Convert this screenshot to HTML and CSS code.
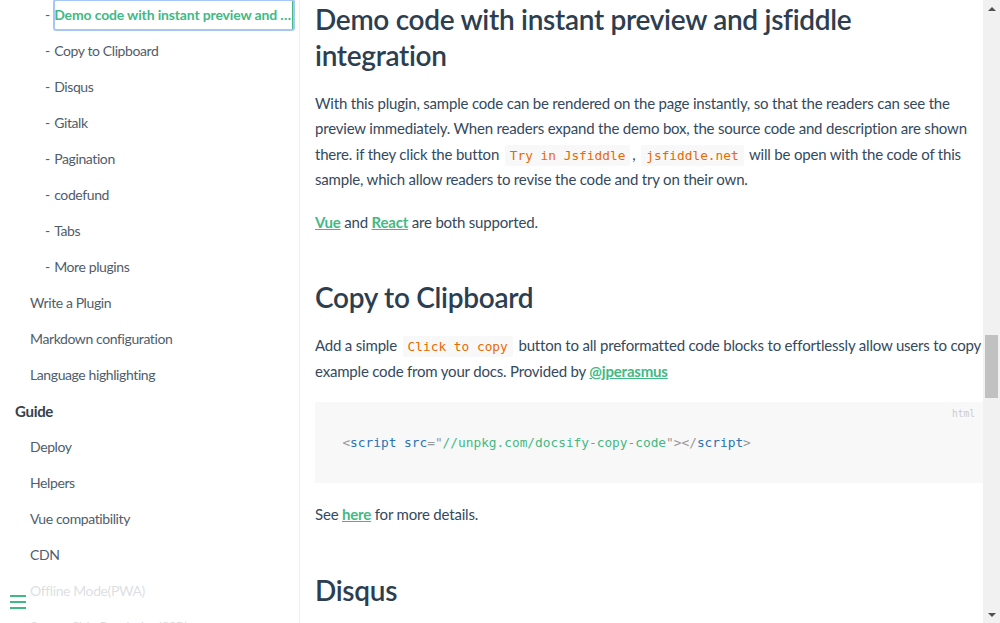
FILE: index.html
```html
<!DOCTYPE html>
<html lang="en">
<head>
<meta charset="utf-8">
<title>Plugins - docsify</title>
<link rel="stylesheet" href="styles.css">
</head>
<body>
<div class="app">
  <aside class="sidebar">
    <div class="sidebar-nav">
      <ul class="nav lv2">
        <li>
          <ul class="nav sub">
            <li class="active"><a href="#demo" class="focused">Demo code with instant preview and jsfiddle integration</a></li>
            <li><a href="#copy">Copy to Clipboard</a></li>
            <li><a href="#disqus">Disqus</a></li>
            <li><a href="#gitalk">Gitalk</a></li>
            <li><a href="#pagination">Pagination</a></li>
            <li><a href="#codefund">codefund</a></li>
            <li><a href="#tabs">Tabs</a></li>
            <li><a href="#more">More plugins</a></li>
          </ul>
        </li>
        <li><a href="#write">Write a Plugin</a></li>
        <li><a href="#markdown">Markdown configuration</a></li>
        <li><a href="#lang">Language highlighting</a></li>
      </ul>
      <ul class="nav lv1">
        <li>
          <p class="group">Guide</p>
          <ul class="nav inner">
            <li><a href="#deploy">Deploy</a></li>
            <li><a href="#helpers">Helpers</a></li>
            <li><a href="#vue">Vue compatibility</a></li>
            <li><a href="#cdn">CDN</a></li>
            <li><a href="#pwa">Offline Mode(PWA)</a></li>
            <li><a href="#ssr">Server-Side Rendering(SSR)</a></li>
            <li><a href="#embed">Embed Files</a></li>
          </ul>
        </li>
      </ul>
    </div>
    <button class="sidebar-toggle" aria-label="Toggle sidebar">
      <span></span><span></span><span></span>
    </button>
  </aside>

  <main class="content">
    <section class="markdown-section">
      <h2 id="demo" class="first">Demo code with instant preview and jsfiddle integration</h2>
      <p>With this plugin, sample code can be rendered on the page instantly, so that the readers can see the preview immediately. When readers expand the demo box, the source code and description are shown there. if they click the button <code>Try in Jsfiddle</code>, <code>jsfiddle.net</code> will be open with the code of this sample, which allow readers to revise the code and try on their own.</p>
      <p><a href="#vue-demo">Vue</a> and <a href="#react-demo">React</a> are both supported.</p>

      <h2 id="copy">Copy to Clipboard</h2>
      <p>Add a simple <code>Click to copy</code> button to all preformatted code blocks to effortlessly allow users to copy example code from your docs. Provided by <a href="#jperasmus">@jperasmus</a></p>
      <pre class="code-block"><span class="lang">html</span><code><span class="t-punc">&lt;</span><span class="t-tag">script</span> <span class="t-attr">src</span><span class="t-punc">="</span><span class="t-val">//unpkg.com/docsify-copy-code</span><span class="t-punc">"&gt;&lt;/</span><span class="t-tag">script</span><span class="t-punc">&gt;</span></code></pre>
      <p>See <a href="#here">here</a> for more details.</p>

      <h2 id="disqus">Disqus</h2>
      <p>Disqus comments.</p>
    </section>
  </main>

  <div class="vscroll" aria-hidden="true">
    <div class="arrow up"></div>
    <div class="track"><div class="thumb"></div></div>
    <div class="arrow down"></div>
  </div>
</div>
</body>
</html>
```

FILE: styles.css
```css
* { box-sizing: border-box; }

html, body {
  margin: 0;
  padding: 0;
  height: 100%;
  overflow: hidden;
  background: #fff;
}

body {
  font-family: Lato, "Source Sans Pro", "Helvetica Neue", Arial, sans-serif;
  font-size: 15px;
  color: #34495e;
  -webkit-font-smoothing: antialiased;
}

.app {
  display: flex;
  height: 623px;
}

/* ---------- sidebar ---------- */
.sidebar {
  position: relative;
  flex: 0 0 300px;
  width: 300px;
  height: 100%;
  border-right: 1px solid #eee;
  overflow: hidden;
  color: #364149;
}

.sidebar-nav {
  line-height: 30px;
  padding-right: 5px;
}

.nav {
  list-style: none;
  margin: 0;
  padding: 0;
}

.nav li {
  margin: 0 0 6px;
}

.nav.lv2 { margin-left: 30px; }
.nav.lv1 { margin-left: 15px; }
.nav.inner { margin-left: 15px; margin-top: 6px; }
.nav.sub { margin-left: 15px; }

.nav.sub > li::before {
  content: "-";
  float: left;
  padding-right: 4px;
  color: #505d6b;
  font-size: 14px;
}

.nav a {
  display: block;
  color: #505d6b;
  font-size: 14px;
  letter-spacing: -0.4px;
  text-decoration: none;
  white-space: nowrap;
  overflow: hidden;
  text-overflow: ellipsis;
}

.nav li.active > a {
  color: #42b983;
  font-weight: 700;
  letter-spacing: -0.15px;
  border-right: 2px solid #42b983;
}

.nav a.focused {
  outline: 2px solid #a6c6f5;
  outline-offset: -1px;
  border-radius: 2px;
}

.group {
  margin: 0;
  font-size: 15px;
  font-weight: 700;
  letter-spacing: -0.3px;
  color: #364149;
}

.sidebar-toggle {
  position: absolute;
  left: 0;
  bottom: 0;
  width: 284px;
  padding: 10px;
  border: 0;
  background: rgba(255, 255, 255, 0.8);
  text-align: left;
  cursor: pointer;
}

.sidebar-toggle span {
  display: block;
  width: 16px;
  height: 2px;
  margin-bottom: 4px;
  background: #42b983;
}

/* ---------- content ---------- */
.content {
  flex: 1 1 auto;
  min-width: 0;
  height: 100%;
  overflow: hidden;
}

.markdown-section {
  padding: 1px 0 40px 15px;
}

.markdown-section h2 {
  margin: 44px 0 12.8px;
  font-size: 28px;
  line-height: 36px;
  font-weight: 600;
  letter-spacing: -0.3px;
  color: #2c3e50;
}

.markdown-section h2.first { margin-top: 0; }

.markdown-section p {
  margin: 18px 0;
  line-height: 25.3px;
  letter-spacing: -0.19px;
}

.markdown-section a {
  color: #42b983;
  font-weight: 700;
  text-decoration: underline;
}

.markdown-section code {
  font-family: "DejaVu Sans Mono", "Liberation Mono", monospace;
  font-size: 12.8px;
  line-height: 1;
  letter-spacing: 0;
  color: #e96900;
  background: #f8f8f8;
  padding: 3px 5px;
  margin: 0 2px;
  border-radius: 2px;
  white-space: nowrap;
}

.code-block {
  position: relative;
  margin: 17px 0 19px;
  padding: 0 22.4px;
  background: #f8f8f8;
  font-family: "DejaVu Sans Mono", "Liberation Mono", monospace;
  overflow: hidden;
}

.code-block code {
  display: block;
  padding: 28.6px 5px;
  margin: 0;
  background: transparent;
  color: #525252;
  font-size: 12.8px;
  line-height: 24px;
  border-radius: 0;
}

.code-block .lang {
  position: absolute;
  top: 0;
  right: 0;
  padding: 5px 8px 0;
  font-size: 9.6px;
  line-height: 14px;
  color: #ccc;
}

.t-punc { color: #999; }
.t-tag, .t-attr { color: #2973b7; }
.t-val { color: #42b983; }

/* ---------- fake window scrollbar ---------- */
.vscroll {
  flex: 0 0 17px;
  display: flex;
  flex-direction: column;
  background: #f1f1f1;
  height: 100%;
}

.arrow {
  flex: 0 0 17px;
  display: flex;
  align-items: center;
  justify-content: center;
}

.arrow::before {
  content: "";
  width: 0;
  height: 0;
  border-left: 4px solid transparent;
  border-right: 4px solid transparent;
}

.arrow.up::before { border-bottom: 4px solid #505050; }
.arrow.down::before { border-top: 4px solid #505050; }

.track {
  flex: 1 1 auto;
  padding: 318px 2px 0;
}

.thumb {
  height: 63px;
  background: #c1c1c1;
}
```
